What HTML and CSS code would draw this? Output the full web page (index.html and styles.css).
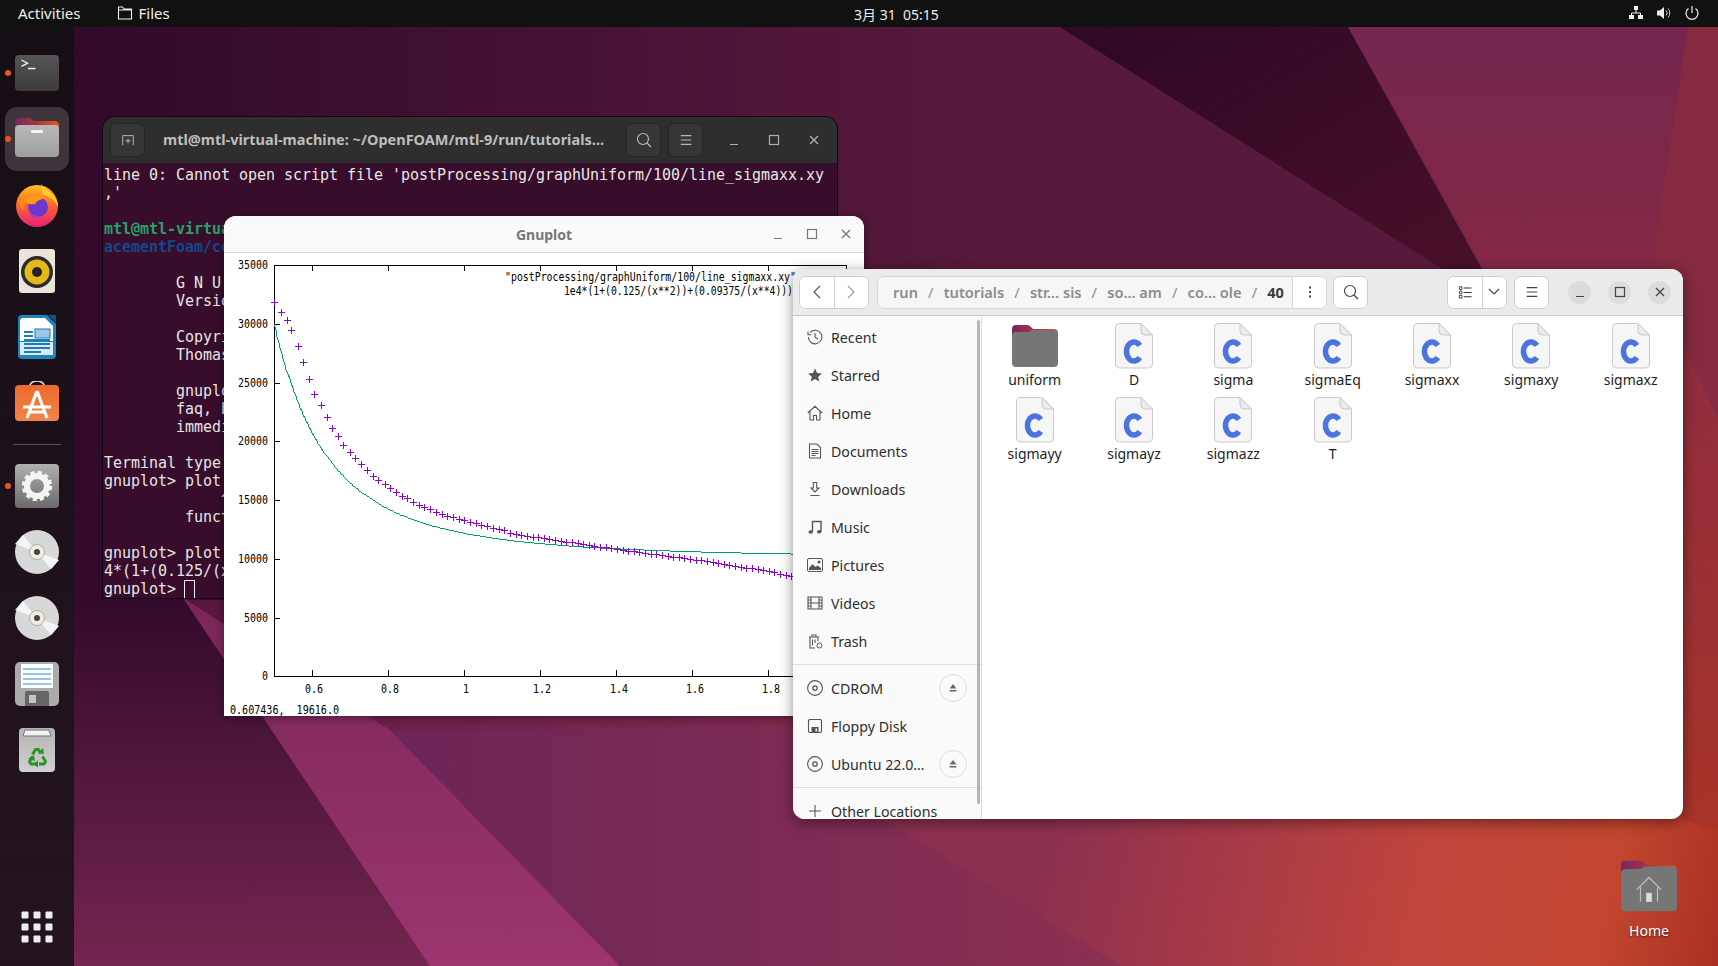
FILE: index.html
```html
<!DOCTYPE html>
<html lang="en">
<head>
<meta charset="utf-8">
<title>Ubuntu desktop</title>
<link rel="stylesheet" href="styles.css">
</head>
<body>
<svg class="defs" aria-hidden="true">
  <defs>
    <linearGradient id="g-base" x1="0" y1="0" x2="1" y2="1">
      <stop offset="0" stop-color="#2a041f"/><stop offset=".3" stop-color="#4c1238"/><stop offset=".58" stop-color="#7c2850"/><stop offset=".8" stop-color="#a83a48"/><stop offset="1" stop-color="#b83a2a"/>
    </linearGradient>
    <linearGradient id="g-left" x1="0" y1="0" x2="0" y2="1"><stop offset="0" stop-color="#330a2c"/><stop offset="1" stop-color="#74264f"/></linearGradient>
    <linearGradient id="g-band" gradientUnits="userSpaceOnUse" x1="100" y1="0" x2="1000" y2="0"><stop offset="0" stop-color="#320a2b"/><stop offset="1" stop-color="#581a3c"/></linearGradient>
    <linearGradient id="g-dark" x1="0" y1="0" x2="1" y2="1"><stop offset="0" stop-color="#2e0824"/><stop offset="1" stop-color="#4a1028"/></linearGradient>
    <linearGradient id="g-tr" x1="0" y1="0" x2="0" y2="1"><stop offset="0" stop-color="#74264e"/><stop offset="1" stop-color="#842844"/></linearGradient>
    <linearGradient id="g-mag" x1="0" y1="0" x2="0" y2="1"><stop offset="0" stop-color="#7a2658"/><stop offset="1" stop-color="#9c3570"/></linearGradient>
    <linearGradient id="g-mid" x1="0" y1="0" x2="1" y2="0"><stop offset="0" stop-color="#6c2558"/><stop offset="1" stop-color="#8c3050"/></linearGradient>
    <linearGradient id="g-red" gradientUnits="userSpaceOnUse" x1="1050" y1="820" x2="1718" y2="966"><stop offset="0" stop-color="#8c3050"/><stop offset=".55" stop-color="#c0443c"/><stop offset=".82" stop-color="#c2462f"/><stop offset="1" stop-color="#aa3022"/></linearGradient>
    <linearGradient id="g-strip" x1="0" y1="0" x2="0" y2="1"><stop offset="0" stop-color="#8c2c42"/><stop offset="1" stop-color="#a83428"/></linearGradient>
    <linearGradient id="g-tab" x1="0" y1="0" x2="1" y2="0"><stop offset="0" stop-color="#7a2560"/><stop offset=".55" stop-color="#a83a40"/><stop offset="1" stop-color="#e8561e"/></linearGradient>
    <linearGradient id="g-light" x1="0" y1="0" x2="0" y2="1"><stop offset="0" stop-color="#b8b8b8"/><stop offset="1" stop-color="#9e9e9e"/></linearGradient>
    <linearGradient id="g-term" x1="0" y1="0" x2="0" y2="1"><stop offset="0" stop-color="#555"/><stop offset="1" stop-color="#3c3c3c"/></linearGradient>
    <linearGradient id="g-set" x1="0" y1="0" x2="0" y2="1"><stop offset="0" stop-color="#b0b0b0"/><stop offset="1" stop-color="#6a6a6a"/></linearGradient>
    <linearGradient id="g-shop" x1="0" y1="0" x2="0" y2="1"><stop offset="0" stop-color="#ed6a2c"/><stop offset="1" stop-color="#f2854a"/></linearGradient>
    <linearGradient id="g-fox" x1="0" y1="0" x2="0" y2="1"><stop offset="0" stop-color="#ffc21e"/><stop offset=".45" stop-color="#ff6a2a"/><stop offset="1" stop-color="#e6207a"/></linearGradient>
    <linearGradient id="g-bin" x1="0" y1="0" x2="0" y2="1"><stop offset="0" stop-color="#b4b4b4"/><stop offset="1" stop-color="#d0d0d0"/></linearGradient>
  </defs>
  <symbol id="folder" viewBox="0 0 46 42">
    <path d="M4 0h11c2 0 3 1 4.500 2.500L21 4h21c2.500 0 4 1.500 4 4v10H0V4c0-2.500 1.500-4 4-4z" fill="url(#g-tab)"/>
    <path d="M4 7h11c2 0 3-.500 4-2h23c2.500 0 4 1.500 4 4v29c0 2.500-1.500 4-4 4H4c-2.500 0-4-1.500-4-4V11c0-2.500 1.500-4 4-4z" fill="#767676"/>
  </symbol>
  <symbol id="cfile" viewBox="0 0 38 46">
    <path d="M4.500.5H26L37.500 12v29a4 4 0 0 1-4 4h-29a4 4 0 0 1-4-4V4.500a4 4 0 0 1 4-4z" fill="#f6f6f6" stroke="#c9c9c9"/>
    <path d="M26 .5V8a4 4 0 0 0 4 4h7.500z" fill="#ececec" stroke="#c9c9c9"/>
    <path d="M24.800 22.500A7.500 9.500 0 1 0 24.800 34.500" fill="none" stroke="#4a74e0" stroke-width="5.500"/>
  </symbol>
  <symbol id="i-clock" viewBox="0 0 16 16"><path d="M3 3.500A6.800 6.800 0 1 1 1.300 8M1 2.500v3.200h3.200M8 4v4.300l2.800 1.700" fill="none" stroke="#555" stroke-width="1.100"/></symbol>
  <symbol id="i-star" viewBox="0 0 16 16"><path d="M8 1.500l2 4.500 4.900.5-3.700 3.200 1.100 4.800L8 12l-4.300 2.500 1.100-4.800L1.100 6.500 6 6z" fill="#555"/></symbol>
  <symbol id="i-home" viewBox="0 0 16 16"><path d="M.8 8L8 1.300 15.200 8M3 6.500V15h3.500v-4.500h3V15H13V6.500" fill="none" stroke="#555" stroke-width="1.100"/></symbol>
  <symbol id="i-doc" viewBox="0 0 16 16"><path d="M2.500 1h7.500l3.500 3.500V15h-11zM4.500 6.500h7M4.500 8.500h7M4.500 10.500h7M4.500 12.500h4" fill="none" stroke="#555" stroke-width="1.100"/></symbol>
  <symbol id="i-down" viewBox="0 0 16 16"><path d="M6.300 1.500h3.400v5.500h2.300L8 11 4 7h2.300zM3.500 14.500h9" fill="none" stroke="#555" stroke-width="1.100"/></symbol>
  <symbol id="i-music" viewBox="0 0 16 16"><path d="M5.500 12.800V2.500h8.500v10" fill="none" stroke="#555" stroke-width="1.400"/><ellipse cx="3.700" cy="13" rx="2.300" ry="1.800" fill="#555"/><ellipse cx="12.200" cy="12.700" rx="2.300" ry="1.800" fill="#555"/></symbol>
  <symbol id="i-pic" viewBox="0 0 16 16"><rect x=".5" y="1.500" width="15" height="13" rx="1.500" fill="none" stroke="#555"/><path d="M2 13v-2l3.500-4 3 3 2-1.500L14 11v2z" fill="#555"/><circle cx="12" cy="5" r="1.500" fill="#555"/></symbol>
  <symbol id="i-film" viewBox="0 0 16 16"><path d="M1 2h14v12H1zM4 2v12M12 2v12M4 8h8M1 5h3M1 8h3M1 11h3M12 5h3M12 8h3M12 11h3" fill="none" stroke="#555" stroke-width="1.100"/></symbol>
  <symbol id="i-trash" viewBox="0 0 16 16"><path d="M2 4h10M5 4V2h4v2M3 4v11h5M11 4v4M5.500 6.500v6M8 6.500V10" fill="none" stroke="#555" stroke-width="1.100"/><circle cx="12.500" cy="12.500" r="2.500" fill="none" stroke="#555"/></symbol>
  <symbol id="i-cd" viewBox="0 0 16 16"><circle cx="8" cy="8" r="7.400" fill="none" stroke="#555" stroke-width="1.100"/><circle cx="8" cy="8" r="2.200" fill="none" stroke="#555" stroke-width="1.300"/></symbol>
  <symbol id="i-floppy" viewBox="0 0 16 16"><path d="M2.500 1.500h11l1 1v11l-1 1h-11l-1-1v-11z" fill="none" stroke="#555" stroke-width="1.100"/><path d="M4.500 9h7v5.500h-7z" fill="#555"/><path d="M8.500 10.500h1.500v3H8.500z" fill="#fafafa"/></symbol>
  <symbol id="i-plus" viewBox="0 0 16 16"><path d="M8 2v12M2 8h12" stroke="#555" stroke-width="1.100"/></symbol>
  <symbol id="i-eject" viewBox="0 0 16 16"><path d="M8 2.500l4.500 6h-9zM3.500 10.500h9v2h-9z" fill="#666"/></symbol>
  <symbol id="i-search" viewBox="0 0 16 16"><circle cx="7" cy="7" r="5.500" fill="none" stroke="currentColor" stroke-width="1.200"/><path d="M11 11l4 4" stroke="currentColor" stroke-width="1.200"/></symbol>
  <symbol id="i-menu" viewBox="0 0 16 16"><path d="M2 3h12M2 8h12M2 13h12" stroke="currentColor" stroke-width="1.200"/></symbol>
  <symbol id="i-min" viewBox="0 0 12 12"><path d="M2 10.500h8" stroke="currentColor" stroke-width="1.200"/></symbol>
  <symbol id="i-max" viewBox="0 0 12 12"><rect x="1.500" y="1.500" width="9" height="9" fill="none" stroke="currentColor" stroke-width="1.200"/></symbol>
  <symbol id="i-close" viewBox="0 0 12 12"><path d="M2 2l8 8M10 2l-8 8" stroke="currentColor" stroke-width="1.300"/></symbol>
</svg>

<svg class="wallpaper" viewBox="0 0 1718 966" preserveAspectRatio="none" aria-hidden="true">
  <rect width="1718" height="966" fill="url(#g-base)"/>
  <polygon points="74,27 1060,27 1480,290 1000,290 760,600 74,600" fill="url(#g-band)"/>
  <polygon points="1060,27 1348,27 1488,280 1460,280" fill="url(#g-dark)"/>
  <polygon points="1348,27 1688,27 1650,275 1488,275" fill="url(#g-tr)"/>
  <polygon points="1688,27 1718,27 1718,420 1650,275" fill="#852a40"/>
  <polygon points="74,598 183,598 430,966 74,966" fill="url(#g-left)"/>
  <polygon points="183,598 390,730 620,966 430,966" fill="url(#g-mag)"/>
  <polygon points="390,730 820,730 1122,966 620,966" fill="url(#g-mid)"/>
  <polygon points="820,780 1332,820 1718,820 1718,966 1122,966" fill="url(#g-red)"/>
  <polygon points="1650,275 1718,420 1718,830 1683,820" fill="url(#g-strip)"/>
</svg>

<header class="topbar">
  <span class="tb-activities">Activities</span>
  <span class="tb-app">
    <svg class="tb-folder" viewBox="0 0 16 14"><path d="M1.500 1h4l1.500 2h7.500v10h-13zM1.500 4h13" fill="none" stroke="#eee" stroke-width="1.100"/></svg>
    Files
  </span>
  <span class="tb-clock">3月 31&nbsp; 05:15</span>
  <span class="tb-tray">
    <svg class="tb-ic" viewBox="0 0 16 16"><path d="M6 1h4v4H6zM1 10h5v4H1zM10 10h5v4h-5z" fill="#eee"/><path d="M8 5v3M3.500 10V8h9v2" fill="none" stroke="#eee"/></svg>
    <svg class="tb-ic" viewBox="0 0 16 16"><path d="M1 5.500h3L8 2v12L4 10.500H1z" fill="#eee"/><path d="M10 5.500a3.500 3.500 0 0 1 0 5M12 3.500a6.500 6.500 0 0 1 0 9" fill="none" stroke="#ccc"/></svg>
    <svg class="tb-ic" viewBox="0 0 16 16"><path d="M4.500 3.500a6 6 0 1 0 7 0M8 1v7" fill="none" stroke="#eee" stroke-width="1.200"/></svg>
  </span>
</header>

<div class="main">
  <nav class="dock">
    <div class="dock-item running">
      <svg class="dock-ic" viewBox="0 0 44 44"><rect y="4" width="44" height="36" rx="4" fill="url(#g-term)"/><path d="M6.500 9l6 3.200-6 3.200M13 17.500h7.500" fill="none" stroke="#eee" stroke-width="1.400"/></svg>
    </div>
    <div class="dock-item running active">
      <svg class="dock-ic" viewBox="0 0 44 44"><path d="M4 1h11l4 3h21c2 0 4 2 4 4v10H0V5c0-2 2-4 4-4z" fill="url(#g-tab)"/><rect y="8" width="44" height="32" rx="4" fill="url(#g-light)"/><rect x="16" y="13" width="12" height="3" rx="1" fill="#f4f4f4"/></svg>
    </div>
    <div class="dock-item">
      <svg class="dock-ic" viewBox="0 0 44 44"><circle cx="22" cy="23" r="21" fill="url(#g-fox)"/><path d="M26 0c1 5 9 8 13 13 3 4 4 8 4 11-3-6-8-11-15-12z" fill="#ffce2e"/><path d="M3 13c0 3 1 4 3 4 3-5 8-5 11-7-1 4-2 5-3 6-3 3-6 6-5 12-3-3-6-8-6-15z" fill="#ff8a1e"/><circle cx="23" cy="24" r="10" fill="#6d37c9"/><path d="M9 17c6-5 14-5 21-1-5 0-8 2-10 5-4 1-8 0-11-4z" fill="#ff9a1e"/><path d="M14 27c2 5 8 7 13 6-6 4-13 2-13-6z" fill="#9f3fd0"/></svg>
    </div>
    <div class="dock-item">
      <svg class="dock-ic" viewBox="0 0 44 44"><rect x="4" y="0" width="36" height="44" rx="3" fill="#e9e5da"/><circle cx="22" cy="23" r="16" fill="#2c2c2c"/><circle cx="22" cy="23" r="12.500" fill="#e6b81a"/><circle cx="22" cy="23" r="5" fill="#222"/></svg>
    </div>
    <div class="dock-item">
      <svg class="dock-ic" viewBox="0 0 44 44"><path d="M7 0h25l9 9v31a4 4 0 0 1-4 4H7a4 4 0 0 1-4-4V4a4 4 0 0 1 4-4z" fill="#1d84bd"/><path d="M7 3h23l8 8v15H5V5z" fill="#fff"/><path d="M5 27h33v13H5z" fill="#d9ecf6"/><path d="M33 0h8v8z" fill="#17527a"/><path d="M9 17h9M9 21h9M9 25h26M9 29h26M9 33h26M9 37h17" stroke="#1d7cb5" stroke-width="2"/><rect x="20" y="14" width="15" height="9" fill="#9cc8e4" stroke="#1d7cb5"/></svg>
    </div>
    <div class="dock-item">
      <svg class="dock-ic" viewBox="0 0 44 44"><path d="M14 9C14 2 18 0 22 0s8 2 8 9" fill="none" stroke="#ddd" stroke-width="1.500"/><rect y="4" width="44" height="36" rx="4" fill="url(#g-shop)"/><path d="M22 10L12 37M22 10l10 27M8 26h28M13 31h18" fill="none" stroke="#fff" stroke-width="3.200"/></svg>
    </div>
    <div class="dock-sep"></div>
    <div class="dock-item running">
      <svg class="dock-ic" viewBox="0 0 44 44"><rect width="44" height="44" rx="4" fill="url(#g-set)"/><circle cx="22" cy="22" r="10" fill="none" stroke="#f4f4f2" stroke-width="6"/><circle cx="22" cy="22" r="13.500" fill="none" stroke="#f4f4f2" stroke-width="3.500" stroke-dasharray="4.100 3"/></svg>
    </div>
    <div class="dock-item">
      <svg class="dock-ic" viewBox="0 0 44 44"><circle cx="22" cy="22" r="22" fill="#d8d8d8"/><path d="M22 22L44 30 36 39zM22 22L0 14 8 5z" fill="#f4f4f4"/><circle cx="22" cy="22" r="7.500" fill="#f0ece0" stroke="#b5ad98"/><circle cx="22" cy="22" r="3" fill="#444"/></svg>
    </div>
    <div class="dock-item">
      <svg class="dock-ic" viewBox="0 0 44 44"><circle cx="22" cy="22" r="22" fill="#d8d8d8"/><path d="M22 22L44 30 36 39zM22 22L0 14 8 5z" fill="#f4f4f4"/><circle cx="22" cy="22" r="7.500" fill="#f0ece0" stroke="#b5ad98"/><circle cx="22" cy="22" r="3" fill="#444"/></svg>
    </div>
    <div class="dock-item">
      <svg class="dock-ic" viewBox="0 0 44 44"><rect width="44" height="44" rx="5" fill="#ababab"/><rect x="6" y="2" width="32" height="24" fill="#fff"/><path d="M8 7h28M8 12h28M8 17h28M8 22h28" stroke="#2a8cbe"/><path d="M10 31a2 2 0 0 1 2-2h20a2 2 0 0 1 2 2v13H10z" fill="#666"/><rect x="14" y="33" width="7" height="8" fill="#c4c4c4"/></svg>
    </div>
    <div class="dock-item">
      <svg class="dock-ic" viewBox="0 0 44 44"><rect x="4" width="36" height="44" rx="4" fill="url(#g-bin)"/><path d="M8 8l2-6h24l2 6z" fill="#f2f2f2" stroke="#777"/><path d="M17.500 26.500l3-5h3l2 3.500M27.500 28.500l3 5-1.500 2.500h-5M20.500 36H16l-1.500-2.500 3-5" fill="none" stroke="#2a9428" stroke-width="3"/><path d="M23 25.500l6 .5-1-6zM23 32.500v7l-5-3.500zM13 31l6-4 1 6z" fill="#2a9428"/></svg>
    </div>
    <div class="dock-item dock-grid">
      <svg class="dock-ic" viewBox="0 0 44 44"><path d="M7 7h6v6H7zM19 7h6v6h-6zM31 7h6v6h-6zM7 19h6v6H7zM19 19h6v6h-6zM31 19h6v6h-6zM7 31h6v6H7zM19 31h6v6h-6zM31 31h6v6h-6z" fill="#eee" stroke="#eee" stroke-linejoin="round"/></svg>
    </div>
  </nav>
  <main class="desktop">
    <div class="desk-home">
      <svg class="desk-folder" viewBox="0 0 46 42"><use href="#folder"/><path d="M13 24L23 14l10 10M16 22v12M30 22v12M21 34v-7h4v7" fill="none" stroke="#bdbdbd" stroke-width="1"/><path d="M21 34v-7h4v7z" fill="#ddd"/></svg>
      <span class="desk-label">Home</span>
    </div>
  </main>
</div>

<section class="win term">
  <div class="term-head">
    <button class="tbtn"><svg class="ic14" viewBox="0 0 16 16"><path d="M2 14V3h12v11M8 6v6M5 9h6" fill="none" stroke="currentColor" stroke-width="1.100"/></svg></button>
    <div class="term-title">mtl@mtl-virtual-machine: ~/OpenFOAM/mtl-9/run/tutorials…</div>
    <button class="tbtn"><svg class="ic16"><use href="#i-search"/></svg></button>
    <button class="tbtn"><svg class="ic14"><use href="#i-menu"/></svg></button>
    <div class="term-ctl">
      <svg class="ctl"><use href="#i-min"/></svg>
      <svg class="ctl"><use href="#i-max"/></svg>
      <svg class="ctl"><use href="#i-close"/></svg>
    </div>
  </div>
<pre class="term-body">line 0: Cannot open script file 'postProcessing/graphUniform/100/line_sigmaxx.xy
,'

<b class="t-green">mtl@mtl-virtua</b>
<b class="t-blue">acementFoam/co</b>

        G N U
        Versio

        Copyri
        Thomas

        gnuplo
        faq, b
        immedi

Terminal type
gnuplot&gt; plot
             ^
         funct

gnuplot&gt; plot
4*(1+(0.125/(x
gnuplot&gt; <i class="cursor"></i></pre>
</section>

<section class="win gnu">
  <div class="gnu-head">
    <span class="gnu-title">Gnuplot</span>
    <div class="gnu-ctl">
      <svg class="ctl"><use href="#i-min"/></svg>
      <svg class="ctl"><use href="#i-max"/></svg>
      <svg class="ctl"><use href="#i-close"/></svg>
    </div>
  </div>
  <svg id="plot" class="plot" viewBox="224 253 640 463">
    <path class="frame" d="M274.500 265.500H846.500V676.500H274.500Z"/>
    <path class="frame" d="M274 618h6M274 559h6M274 500h6M274 441h6M274 383h6M274 324h6M312.500 676v-6M388.500 676v-6M464.500 676v-6M540.500 676v-6M616.500 676v-6M692.500 676v-6M768.500 676v-6M312.500 265v6M388.500 265v6M464.500 265v6M540.500 265v6M616.500 265v6M692.500 265v6M768.500 265v6"/>
    <g class="labels yl">
      <text x="268" y="269" textLength="30" lengthAdjust="spacingAndGlyphs">35000</text>
      <text x="268" y="328" textLength="30" lengthAdjust="spacingAndGlyphs">30000</text>
      <text x="268" y="387" textLength="30" lengthAdjust="spacingAndGlyphs">25000</text>
      <text x="268" y="445" textLength="30" lengthAdjust="spacingAndGlyphs">20000</text>
      <text x="268" y="504" textLength="30" lengthAdjust="spacingAndGlyphs">15000</text>
      <text x="268" y="563" textLength="30" lengthAdjust="spacingAndGlyphs">10000</text>
      <text x="268" y="622" textLength="24" lengthAdjust="spacingAndGlyphs">5000</text>
      <text x="268" y="680" textLength="6" lengthAdjust="spacingAndGlyphs">0</text>
    </g>
    <g class="labels xl">
      <text x="314" y="693" textLength="18" lengthAdjust="spacingAndGlyphs">0.6</text>
      <text x="390" y="693" textLength="18" lengthAdjust="spacingAndGlyphs">0.8</text>
      <text x="466" y="693" textLength="6" lengthAdjust="spacingAndGlyphs">1</text>
      <text x="542" y="693" textLength="18" lengthAdjust="spacingAndGlyphs">1.2</text>
      <text x="619" y="693" textLength="18" lengthAdjust="spacingAndGlyphs">1.4</text>
      <text x="695" y="693" textLength="18" lengthAdjust="spacingAndGlyphs">1.6</text>
      <text x="771" y="693" textLength="18" lengthAdjust="spacingAndGlyphs">1.8</text>
    </g>
    <g class="labels leg">
      <text x="796" y="281" textLength="291" lengthAdjust="spacingAndGlyphs">"postProcessing/graphUniform/100/line_sigmaxx.xy"</text>
      <text x="793" y="295" textLength="229" lengthAdjust="spacingAndGlyphs">1e4*(1+(0.125/(x**2))+(0.09375/(x**4)))</text>
    </g>
    <text class="labels st" x="230" y="714" textLength="109" lengthAdjust="spacingAndGlyphs">0.607436,  19616.0</text>
    <path id="curve" class="curve"/>
    <path id="marks" class="marks"/>
  </svg>
</section>

<section class="win files">
  <div class="fhead">
    <div class="btn-group nav-group">
      <button class="fbtn"><svg class="chev" viewBox="0 0 10 16"><path d="M8 2L2 8l6 6" fill="none" stroke="#555" stroke-width="1.100"/></svg></button>
      <button class="fbtn"><svg class="chev" viewBox="0 0 10 16"><path d="M2 2l6 6-6 6" fill="none" stroke="#999" stroke-width="1.100"/></svg></button>
    </div>
    <div class="pathbar">
      <span class="crumbs">
        <span>run</span><i>/</i><span>tutorials</span><i>/</i><span>str… sis</span><i>/</i><span>so… am</span><i>/</i><span>co… ole</span><i>/</i><b>40</b>
      </span>
      <button class="path-more"><svg class="dots" viewBox="0 0 4 16"><path d="M1 2.500h2v2H1zM1 7h2v2H1zM1 11.500h2v2H1z" fill="#444"/></svg></button>
    </div>
    <button class="fbtn solo search"><svg class="ic16"><use href="#i-search"/></svg></button>
    <div class="fhead-gap"></div>
    <div class="btn-group view-group">
      <button class="fbtn"><svg class="ic14" viewBox="0 0 16 16"><path d="M1.500 2h3v3h-3zM1.500 7h3v3h-3zM1.500 12h3v3h-3z" fill="none" stroke="#333"/><path d="M6.500 3.500h9M6.500 8.500h9M6.500 13.500h9" stroke="#333" stroke-width="1.200"/></svg></button>
      <button class="fbtn narrow"><svg class="chev2" viewBox="0 0 12 8"><path d="M1 1l5 5 5-5" fill="none" stroke="#444" stroke-width="1.100"/></svg></button>
    </div>
    <button class="fbtn solo menu"><svg class="ic14"><use href="#i-menu"/></svg></button>
    <div class="f-ctl">
      <span class="circ"><svg class="ctl"><use href="#i-min"/></svg></span>
      <span class="circ"><svg class="ctl"><use href="#i-max"/></svg></span>
      <span class="circ"><svg class="ctl"><use href="#i-close"/></svg></span>
    </div>
  </div>
  <div class="fbody">
    <aside class="side">
      <a class="row"><svg class="ric"><use href="#i-clock"/></svg><span>Recent</span></a>
      <a class="row"><svg class="ric"><use href="#i-star"/></svg><span>Starred</span></a>
      <a class="row"><svg class="ric"><use href="#i-home"/></svg><span>Home</span></a>
      <a class="row"><svg class="ric"><use href="#i-doc"/></svg><span>Documents</span></a>
      <a class="row"><svg class="ric"><use href="#i-down"/></svg><span>Downloads</span></a>
      <a class="row"><svg class="ric"><use href="#i-music"/></svg><span>Music</span></a>
      <a class="row"><svg class="ric"><use href="#i-pic"/></svg><span>Pictures</span></a>
      <a class="row"><svg class="ric"><use href="#i-film"/></svg><span>Videos</span></a>
      <a class="row"><svg class="ric"><use href="#i-trash"/></svg><span>Trash</span></a>
      <hr class="sep">
      <a class="row"><svg class="ric"><use href="#i-cd"/></svg><span>CDROM</span><em class="eject"><svg class="ejic"><use href="#i-eject"/></svg></em></a>
      <a class="row"><svg class="ric"><use href="#i-floppy"/></svg><span>Floppy Disk</span></a>
      <a class="row"><svg class="ric"><use href="#i-cd"/></svg><span>Ubuntu 22.0…</span><em class="eject"><svg class="ejic"><use href="#i-eject"/></svg></em></a>
      <hr class="sep">
      <a class="row"><svg class="ric"><use href="#i-plus"/></svg><span>Other Locations</span></a>
      <div class="scroll"></div>
    </aside>
    <div class="grid">
      <div class="cell"><svg class="fold"><use href="#folder"/></svg><span>uniform</span></div>
      <div class="cell"><svg class="cf"><use href="#cfile"/></svg><span>D</span></div>
      <div class="cell"><svg class="cf"><use href="#cfile"/></svg><span>sigma</span></div>
      <div class="cell"><svg class="cf"><use href="#cfile"/></svg><span>sigmaEq</span></div>
      <div class="cell"><svg class="cf"><use href="#cfile"/></svg><span>sigmaxx</span></div>
      <div class="cell"><svg class="cf"><use href="#cfile"/></svg><span>sigmaxy</span></div>
      <div class="cell"><svg class="cf"><use href="#cfile"/></svg><span>sigmaxz</span></div>
      <div class="cell"><svg class="cf"><use href="#cfile"/></svg><span>sigmayy</span></div>
      <div class="cell"><svg class="cf"><use href="#cfile"/></svg><span>sigmayz</span></div>
      <div class="cell"><svg class="cf"><use href="#cfile"/></svg><span>sigmazz</span></div>
      <div class="cell"><svg class="cf"><use href="#cfile"/></svg><span>T</span></div>
    </div>
  </div>
</section>
<script src="plot.js"></script>
</body>
</html>
```
FILE: styles.css
```css
* { box-sizing: border-box; }
html, body { margin: 0; height: 100%; }
body {
  width: 1718px; height: 966px; position: relative; overflow: hidden;
  display: flex; flex-direction: column;
  font-family: "Noto Sans", "Open Sans", sans-serif; color: #2e2e2e;
}
button { font: inherit; padding: 0; margin: 0; border: 0; background: none; color: inherit; }
.defs { position: absolute; width: 0; height: 0; }
.wallpaper { position: absolute; left: 0; top: 0; width: 1718px; height: 966px; }

.topbar {
  position: relative; flex: 0 0 27px; height: 27px; background: #111; padding-bottom: 2px;
  color: #eee; font-size: 15px; display: flex; align-items: center;
}
.tb-activities { margin-left: 18px; }
.tb-app { margin-left: 36px; display: flex; align-items: center; gap: 6px; }
.tb-folder { width: 16px; height: 14px; }
.tb-clock { position: absolute; left: 854px; top: 4px; font-family: "Noto Sans", "Noto Sans CJK SC", sans-serif; font-size: 14px; }
.tb-tray { margin-left: auto; margin-right: 18px; display: flex; gap: 12px; }
.tb-ic { width: 16px; height: 16px; }

.main { position: relative; flex: 1; display: flex; min-height: 0; }
.dock {
  flex: 0 0 74px; background: linear-gradient(#160e15, #231420);
  display: flex; flex-direction: column; align-items: center; padding: 13px 0 6px;
}
.dock-item { width: 64px; height: 66px; flex: 0 0 66px; display: flex; align-items: center; justify-content: center; position: relative; }
.dock-item.active::before { content: ""; position: absolute; inset: 1px 0; background: #3e343a; border-radius: 12px; }
.dock-item.running::after { content: ""; position: absolute; left: 0; top: 30px; width: 6px; height: 6px; border-radius: 50%; background: #e95420; }
.dock-ic { width: 44px; height: 44px; position: relative; }
.dock-sep { width: 48px; flex: 0 0 1px; background: #5a5258; margin: 8px 0 8px; }
.dock-grid { margin-top: auto; }

.desktop { position: relative; flex: 1; }
.desk-home { position: absolute; right: 24px; bottom: 26px; width: 90px; display: flex; flex-direction: column; align-items: center; gap: 9px; }
.desk-folder { width: 56px; height: 52px; }
.desk-label { color: #fff; font-size: 14px; text-shadow: 0 1px 2px rgba(0,0,0,.6); }

.win { position: absolute; overflow: hidden; }
.term { left: 103px; top: 117px; width: 734px; height: 481px; background: #380d2b; border-radius: 12px 12px 0 0; box-shadow: 0 0 0 1px #150510; }
.term-head { height: 46px; background: #2e2e2e; display: flex; align-items: center; padding-left: 7px; color: #b9b9b9; }
.tbtn { width: 35px; height: 34px; background: #363636; border: 1px solid #262626; border-radius: 6px; display: flex; align-items: center; justify-content: center; margin-right: 7px; }
.tbtn:first-child { margin-right: 18px; }
.term-title { width: 448px; font-size: 14.5px; font-weight: 700; color: #bdbdbd; white-space: nowrap; margin-right: 15px; padding-bottom: 2px; }
.term-ctl { display: flex; gap: 28px; margin-left: 18px; color: #b0b0b0; }
.ctl { width: 12px; height: 12px; }
.ic14 { width: 14px; height: 14px; }
.ic16 { width: 16px; height: 16px; }
.term-body { margin: 0; padding: 3px 0 0 1px; font: 15px/18px "DejaVu Sans Mono", monospace; letter-spacing: -.03px; color: #e6e6e6; overflow: hidden; height: 435px; }
.t-green { color: #26a269; }
.t-blue { color: #12488b; }
.cursor { display: inline-block; width: 11px; height: 19px; border: 1px solid #eee; vertical-align: -5px; margin-left: -1px; }

.gnu { left: 224px; top: 216px; width: 640px; height: 500px; background: #fff; border-radius: 12px 12px 0 0; box-shadow: 0 2px 10px rgba(0,0,0,.4); }
.gnu-head { height: 37px; background: #fafafa; border-bottom: 1px solid #d8d8d8; display: flex; align-items: center; justify-content: center; position: relative; }
.gnu-title { font-size: 14px; font-weight: 700; color: #777; }
.gnu-ctl { position: absolute; right: 12px; top: 12px; display: flex; gap: 22px; color: #777; }
.plot { display: block; width: 640px; height: 463px; }
.frame { fill: none; stroke: #000; stroke-width: 1; shape-rendering: crispEdges; }
.labels { font: 12px "DejaVu Sans Mono", monospace; fill: #000; }
.yl text, .leg text { text-anchor: end; }
.xl text { text-anchor: middle; }
.st { white-space: pre; }
.curve { fill: none; stroke: #009e73; stroke-width: 1; shape-rendering: crispEdges; }
.marks { fill: none; stroke: #9400d3; stroke-width: 1; shape-rendering: crispEdges; }

.files { left: 793px; top: 269px; width: 890px; height: 550px; background: #fff; border-radius: 12px; box-shadow: 0 3px 14px rgba(0,0,0,.45); display: flex; flex-direction: column; }
.fhead { flex: 0 0 47px; background: #ebebeb; border-bottom: 1px solid #c9c9c9; display: flex; align-items: center; padding-left: 6px; }
.btn-group { display: flex; height: 33px; background: #fff; border: 1px solid #d0cecb; border-radius: 7px; overflow: hidden; }
.btn-group .fbtn { border: 0; border-radius: 0; height: 100%; }
.btn-group .fbtn + .fbtn { border-left: 1px solid #d0cecb; }
.fbtn { width: 35px; height: 33px; background: #fff; border: 1px solid #d0cecb; border-radius: 7px; display: flex; align-items: center; justify-content: center; }
.fbtn.narrow { width: 25px; }
.nav-group { width: 70px; }
.chev { width: 10px; height: 16px; }
.chev2 { width: 12px; height: 8px; }
.pathbar { margin-left: 8px; width: 450px; height: 33px; background: #f6f6f6; border: 1px solid #d8d6d3; border-radius: 7px; display: flex; align-items: center; overflow: hidden; }
.crumbs { flex: 0 0 414px; padding: 0 8px 0 15px; display: flex; justify-content: space-between; align-items: center; font-size: 14.6px; font-weight: 600; color: #8c8c8c; white-space: nowrap; }
.crumbs i { font-style: normal; font-weight: 400; }
.crumbs b { color: #3c3c3c; font-weight: 700; }
.path-more { flex: 1; height: 100%; background: #fff; border-left: 1px solid #d8d6d3; display: flex; align-items: center; justify-content: center; }
.dots { width: 4px; height: 16px; }
.search { margin-left: 6px; color: #444; }
.fhead-gap { flex: 0 0 79px; }
.view-group { width: 60px; }
.menu { margin-left: 7px; color: #444; }
.f-ctl { display: flex; gap: 17px; margin-left: 19px; }
.circ { width: 23px; height: 23px; border-radius: 50%; background: #dcdcdc; display: flex; align-items: center; justify-content: center; color: #444; }

.fbody { flex: 1; display: flex; min-height: 0; }
.side { flex: 0 0 189px; background: #fafafa; border-right: 1px solid #dcdcdc; padding-top: 2px; position: relative; overflow: hidden; }
.row { height: 38px; display: flex; align-items: center; padding-left: 14px; font-size: 14.2px; color: #2e2e2e; white-space: nowrap; position: relative; }
.ric { width: 16px; height: 16px; margin-right: 8px; flex: none; }
.sep { border: 0; height: 1px; background: #dedede; margin: 4px 0; }
.eject { position: absolute; left: 146px; top: 5px; width: 28px; height: 28px; border: 1px solid #ddd; border-radius: 50%; display: flex; align-items: center; justify-content: center; }
.ejic { width: 12px; height: 12px; }
.scroll { position: absolute; left: 184px; top: 4px; width: 3px; height: 484px; background: #b4b4b4; border-radius: 2px; }
.grid { flex: 1; display: grid; grid-template-columns: repeat(7, 99.33px); grid-auto-rows: 74px; padding: 7px 0 0 3px; align-content: start; }
.cell { display: flex; flex-direction: column; align-items: center; font-size: 14px; color: #1e1e1e; }
.cell span { line-height: 20px; }
.cf { width: 38px; height: 46px; margin-bottom: 1px; }
.fold { width: 46px; height: 42px; margin: 2px 0 3px; }
```
FILE: plot.js
```javascript
(function () {
  var sx = function (x) { return 274.3 + (x - 0.5) * 380; };
  var sy = function (v) { return 676 - v / 5000 * 58.67; };

  // Analytic curve: only the part left of the file window is visible.
  var d = '';
  for (var x = 0.5; x <= 2.0; x += 0.004) {
    var v = 1e4 * (1 + 0.125 / (x * x) + 0.09375 / (x * x * x * x));
    d += (d ? 'L' : 'M') + Math.round(sx(x)) + ' ' + Math.round(sy(v));
  }
  document.getElementById('curve').setAttribute('d', d);

  // Sampled data points from line_sigmaxx.xy.
  var pts = [[.5,31900],[.517,31050],[.5326,30300],[.545,29500],[.5615,28150],[.576,26730],[.592,25300],
    [.605,24000],[.622,23070],[.638,22050],[.6525,21100],[.667,20430],[.681,19710],[.698,19060],[.713,18550],
    [.729,18040],[.743,17530],[.759,17070],[.774,16680],[.79,16340],[.804,16000],[.82,15700],[.835,15370],
    [.85,15140],[.865,14860],[.88,14570],[.895,14430],[.91,14200],[.925,14000],[.94,13830],[.955,13660],
    [.97,13520],[.985,13380],[1,13270],[1.015,13100],[1.03,13010],[1.045,12870],[1.06,12760],[1.075,12590],
    [1.09,12500],[1.105,12420],[1.12,12210],[1.135,12130],[1.15,12040]];
  var tail = [[1.15,12040],[1.2,11780],[1.4,10820],[1.6,9970],[1.8,8950],[1.9,8200],[2,7500]];
  var seg = 0;
  for (var t = 1.165; t < 2; t += 0.0148) {
    while (tail[seg + 1][0] < t) { seg++; }
    var a = tail[seg], b = tail[seg + 1];
    pts.push([t, a[1] + (b[1] - a[1]) * (t - a[0]) / (b[0] - a[0])]);
  }
  var m = '';
  pts.forEach(function (p) {
    var px = Math.round(sx(p[0])) + 0.5, py = Math.round(sy(p[1])) + 0.5;
    m += 'M' + (px - 3.5) + ' ' + py + 'h7M' + px + ' ' + (py - 3.5) + 'v7';
  });
  document.getElementById('marks').setAttribute('d', m);
})();
```
